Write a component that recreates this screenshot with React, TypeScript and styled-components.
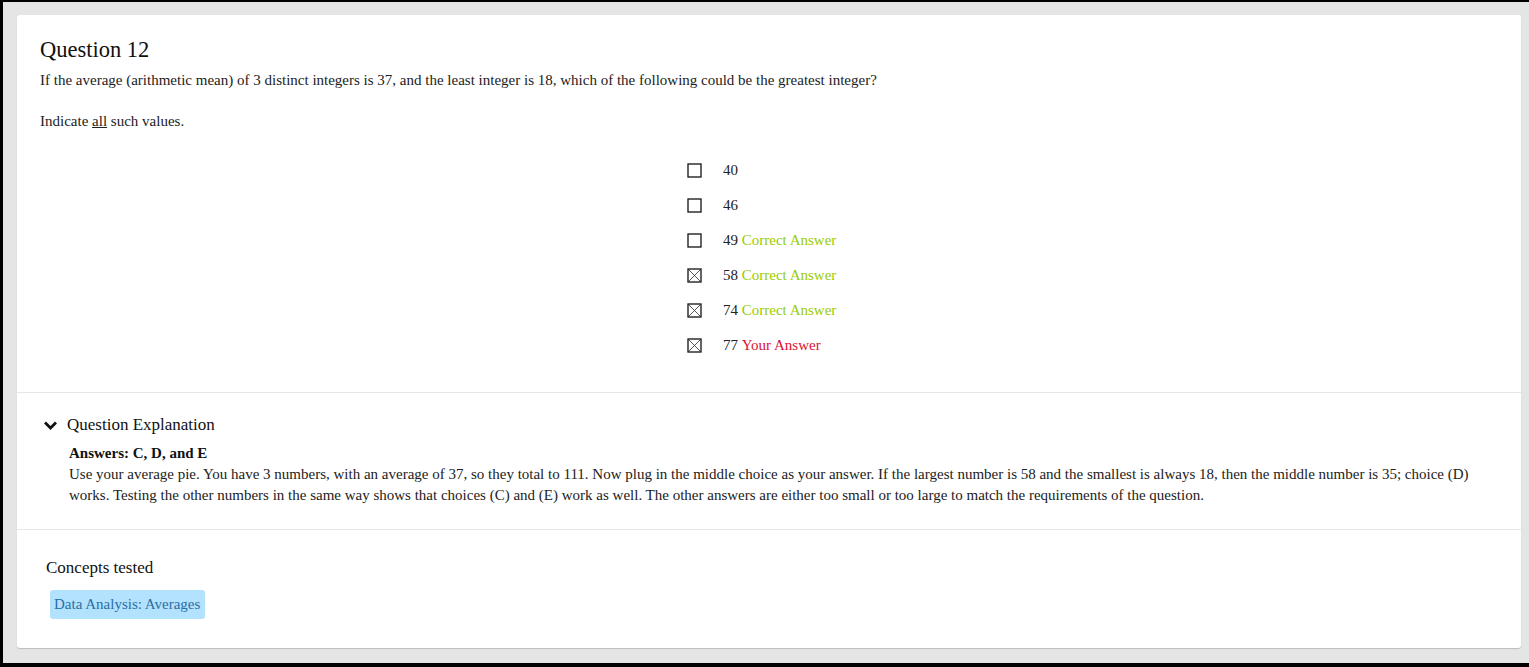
import React from "react";
import styled, { createGlobalStyle } from "styled-components";

const Global = createGlobalStyle`
  html, body { margin: 0; padding: 0; }
  body { font-family: "Liberation Serif", "Times New Roman", serif; color: #222; }
  * { box-sizing: border-box; }
`;

const Frame = styled.div`
  width: 1529px;
  height: 667px;
  background: #e5e5e5;
  border-top: 2px solid #000;
  border-left: 3px solid #000;
  border-bottom: 4px solid #000;
  padding: 13px 8px 15px 14px;
  display: flex;
`;

const Card = styled.div`
  flex: 1;
  background: #fff;
  border-radius: 3px;
  box-shadow: 0 1px 1px rgba(0, 0, 0, 0.18);
  display: flex;
  flex-direction: column;
`;

const Section = styled.section<{ $pad: string; $h?: number }>`
  padding: ${(p) => p.$pad};
  ${(p) => (p.$h ? `height: ${p.$h}px;` : "")}
  border-bottom: ${(p) => (p.$h ? "1px solid #e6e6e6" : "none")};
`;

const Title = styled.h2`
  margin: 0;
  font-weight: normal;
  font-size: 22.5px;
  line-height: 26px;
  color: #111;
`;

const Para = styled.p<{ $mt: number }>`
  margin: ${(p) => p.$mt}px 0 0;
  font-size: 15px;
  line-height: 18px;
  color: #222;
`;

const OptionList = styled.ul`
  list-style: none;
  margin: 31px auto 0;
  padding: 0;
  width: 164px;
  display: flex;
  flex-direction: column;
  gap: 17px;
`;

const Option = styled.li`
  display: flex;
  align-items: center;
  height: 18px;
  font-size: 15px;
  color: #222;
  white-space: pre;
`;

const Box = styled.svg`
  width: 15px;
  height: 15px;
  flex: none;
  margin-right: 21px;
`;

const Tag = styled.span<{ $kind: "correct" | "yours" }>`
  color: ${(p) => (p.$kind === "correct" ? "#99cc00" : "#e0102f")};
`;

const ExplainHead = styled.div`
  display: flex;
  align-items: center;
  gap: 9px;
  font-size: 17px;
  line-height: 20px;
  color: #111;
`;

const ExplainBody = styled.div`
  padding-left: 26px;
  margin-top: 8px;
`;

const Bold = styled.div`
  font-weight: bold;
  font-size: 15px;
  line-height: 20px;
  color: #111;
`;

const Text = styled.p`
  margin: 1px 0 0;
  font-size: 15px;
  line-height: 21px;
  color: #222;
`;

const ConceptsTitle = styled.div`
  font-size: 17px;
  line-height: 20px;
  color: #111;
`;

const Pill = styled.span`
  display: inline-block;
  margin: 12px 0 0 4px;
  background: #b2e2fd;
  color: #2a6ea6;
  font-size: 15px;
  line-height: 17px;
  padding: 6px 5px 6px 4px;
  border-radius: 3px;
`;

const CheckBox = ({ checked }: { checked: boolean }) => (
  <Box viewBox="0 0 15 15">
    <rect x="1" y="1" width="13" height="13" fill="#fff" stroke="#111" strokeWidth="1.3" />
    {checked && <path d="M2 2 L13 13 M13 2 L2 13" stroke="#444" strokeWidth="0.9" />}
  </Box>
);

const options: { v: string; checked: boolean; tag?: "correct" | "yours" }[] = [
  { v: "40", checked: false },
  { v: "46", checked: false },
  { v: "49", checked: false, tag: "correct" },
  { v: "58", checked: true, tag: "correct" },
  { v: "74", checked: true, tag: "correct" },
  { v: "77", checked: true, tag: "yours" },
];

export default function App() {
  return (
    <>
      <Global />
      <Frame>
        <Card>
          <Section $pad="22px 23px 0" $h={378}>
            <Title>Question 12</Title>
            <Para $mt={8}>
              If the average (arithmetic mean) of 3 distinct integers is 37, and the least integer is 18, which of the
              following could be the greatest integer?
            </Para>
            <Para $mt={23}>
              Indicate <u>all</u> such values.
            </Para>
            <OptionList>
              {options.map((o) => (
                <Option key={o.v}>
                  <CheckBox checked={o.checked} />
                  {o.v}
                  {o.tag && (
                    <>
                      {" "}
                      <Tag $kind={o.tag}>{o.tag === "correct" ? "Correct Answer" : "Your Answer"}</Tag>
                    </>
                  )}
                </Option>
              ))}
            </OptionList>
          </Section>
          <Section $pad="22px 26px 0" $h={137}>
            <ExplainHead>
              <svg width="15" height="11" viewBox="0 0 15 11">
                <path d="M2 2.5 L7.5 8 L13 2.5" fill="none" stroke="#111" strokeWidth="2.8" />
              </svg>
              Question Explanation
            </ExplainHead>
            <ExplainBody>
              <Bold>Answers: C, D, and E</Bold>
              <Text>
                Use your average pie. You have 3 numbers, with an average of 37, so they total to 111. Now plug in the
                middle choice as your answer. If the largest number is 58 and the smallest is always 18, then the middle
                number is 35; choice (D) works. Testing the other numbers in the same way shows that choices (C) and (E)
                work as well. The other answers are either too small or too large to match the requirements of the
                question.
              </Text>
            </ExplainBody>
          </Section>
          <Section $pad="28px 29px 0">
            <ConceptsTitle>Concepts tested</ConceptsTitle>
            <Pill>Data Analysis: Averages</Pill>
          </Section>
        </Card>
      </Frame>
    </>
  );
}
